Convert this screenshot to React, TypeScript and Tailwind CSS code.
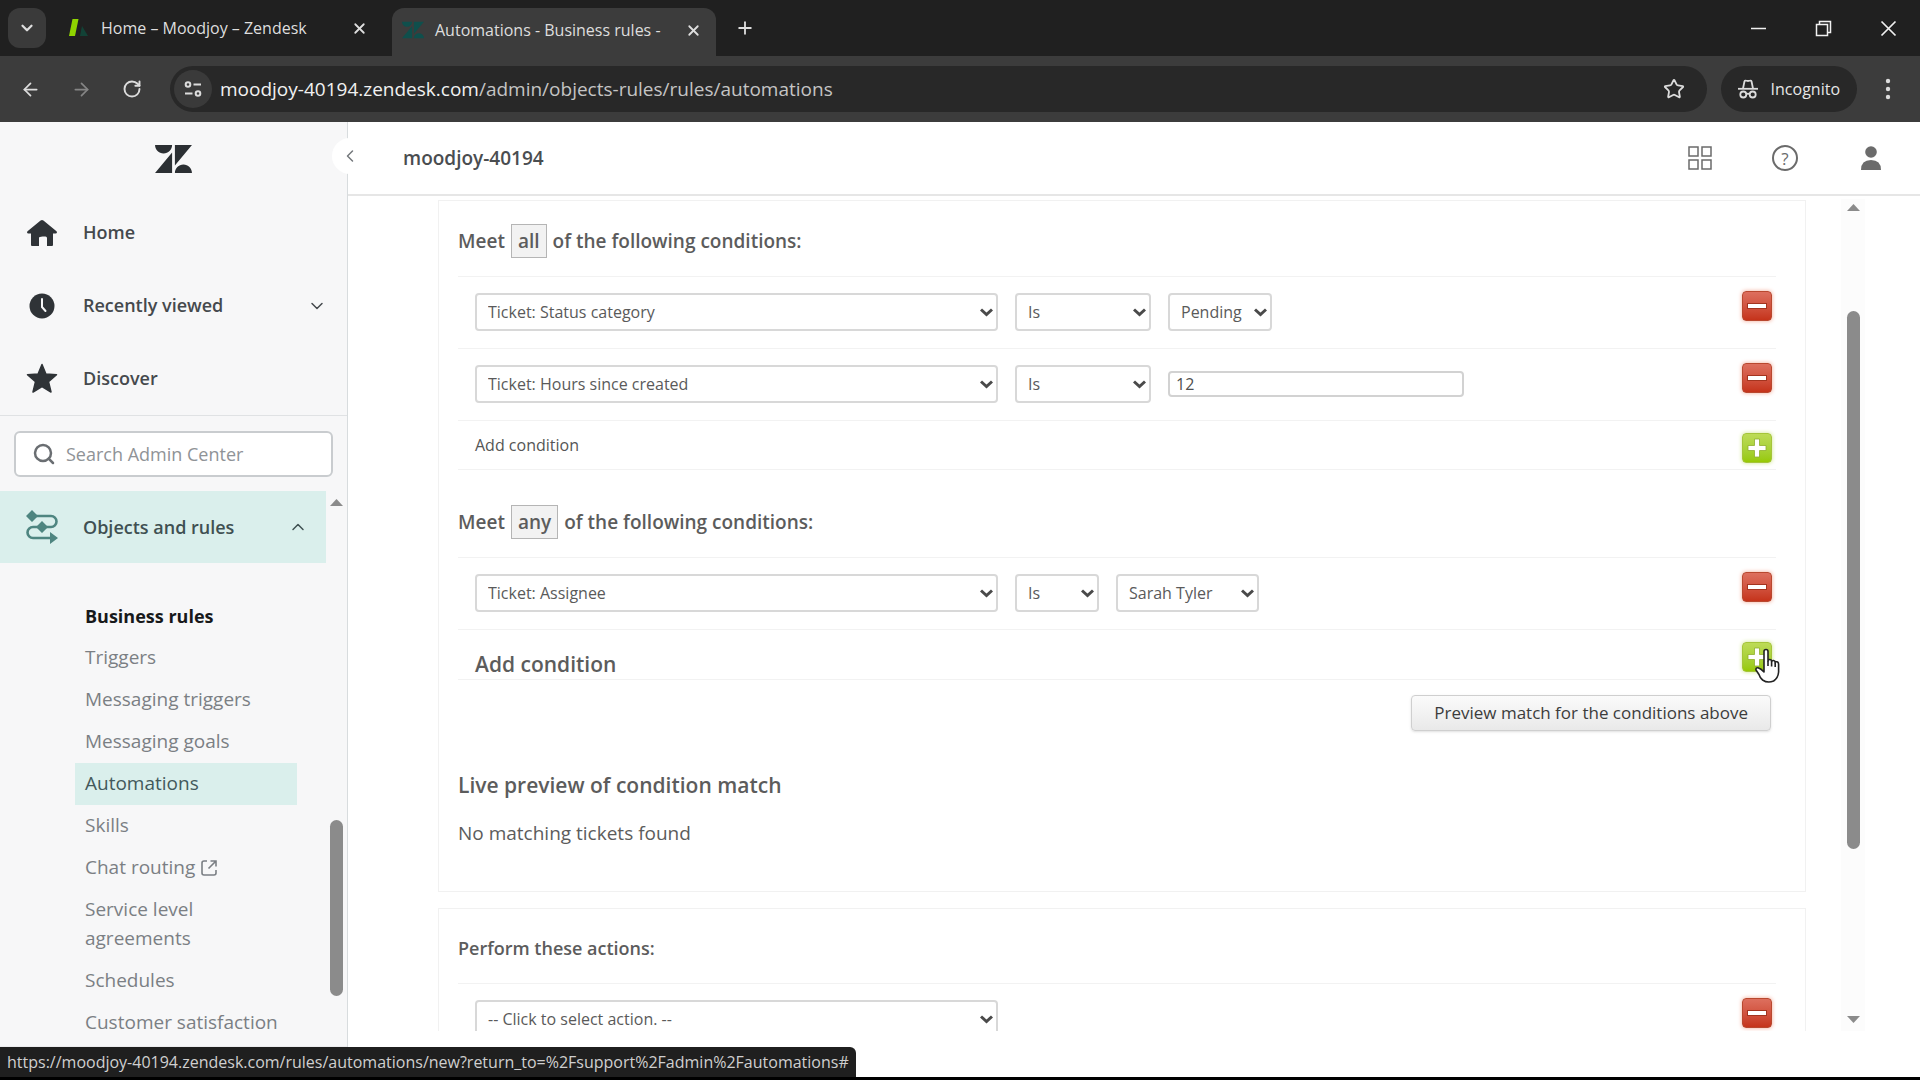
import { useState } from "react";
import type { ReactNode } from "react";
import { ArrowLeft, ArrowRight, ChevronDown, ChevronLeft, ChevronUp, Plus, RotateCw, Search, Star, X } from "lucide-react";

const RULE_LINKS = [
    "Triggers",
    "Messaging triggers",
    "Messaging goals",
    "Automations",
    "Skills",
    "Chat routing",
    "Service level agreements",
    "Schedules",
    "Customer satisfaction",
];

function ZendeskMark({ className }: { className: string }) {
    return (
        <svg viewBox="0 2.9 24 18.2" className={className} fill="currentColor" aria-hidden="true">
            <path d="M12.914 2.904V16.29L24 2.905H12.914zM0 2.906C0 5.966 2.483 8.45 5.543 8.45s5.542-2.484 5.543-5.544H0zm11.086 4.807L0 21.096h11.086V7.713zm7.37 7.84c-3.063 0-5.542 2.48-5.542 5.543H24c0-3.06-2.48-5.543-5.543-5.543z" />
        </svg>
    );
}

/* Browser chrome */

function TabStrip() {
    return (
        <div className="flex h-14 shrink-0 items-end bg-[#202020] text-[#dedede]">
            <button type="button" aria-label="Search tabs" className="mb-2 ml-2 flex h-10 w-[38px] shrink-0 items-center justify-center rounded-xl bg-[#3a3a3a]">
                <ChevronDown size={18} strokeWidth={3} />
            </button>
            <div className="flex h-14 w-[346px] items-center pl-[22px] pr-6">
                <svg width="20" height="20" viewBox="0 0 20 20" aria-hidden="true">
                    <path d="M4.5 1h6l-3.500 17h-6z" fill="#8fd400" />
                    <path d="M14 8l6 10h-8z" fill="#124236" />
                </svg>
                <span className="ml-[13px] flex-1 whitespace-nowrap text-[16px]">Home – Moodjoy – Zendesk</span>
                <button type="button" aria-label="Close Home tab"><X size={17} strokeWidth={2.5} /></button>
            </div>
            <div className="flex h-12 w-[324px] items-center rounded-t-xl bg-[#3c3c3c] pb-1 pl-[10px] pr-[14px]">
                <ZendeskMark className="h-[18px] w-[22px] shrink-0 text-[#0f4f4c]" />
                <span className="ml-[11px] flex-1 whitespace-nowrap text-[16px]">Automations - Business rules -</span>
                <button type="button" aria-label="Close Automations tab" className="ml-4"><X size={17} strokeWidth={2.5} /></button>
            </div>
            <button type="button" aria-label="New tab" className="mb-[18px] ml-[19px]"><Plus size={20} strokeWidth={2.2} /></button>
            <div className="flex h-14 flex-1 items-center justify-end gap-[48px] pr-[23px] text-[#f0f0f0]">
                <button type="button" aria-label="Minimize">
                    <svg width="17" height="17" viewBox="0 0 17 17" stroke="currentColor" strokeWidth="1.5"><path d="M1 8.500h15" /></svg>
                </button>
                <button type="button" aria-label="Restore">
                    <svg width="17" height="17" viewBox="0 0 17 17" fill="none" stroke="currentColor" strokeWidth="1.5"><path d="M1.500 4.500h11v11h-11zM4.500 4.500v-3h11v11h-3" /></svg>
                </button>
                <button type="button" aria-label="Close">
                    <svg width="17" height="17" viewBox="0 0 17 17" fill="none" stroke="currentColor" strokeWidth="1.7"><path d="M1.500 1.500l14 14M15.500 1.500l-14 14" /></svg>
                </button>
            </div>
        </div>
    );
}

function Toolbar() {
    return (
        <div className="flex h-[66px] shrink-0 items-center bg-[#3c3c3c] text-[#dcdcdc]">
            <button type="button" aria-label="Back" className="ml-5"><ArrowLeft size={21} strokeWidth={2} /></button>
            <button type="button" aria-label="Forward" className="ml-[30px] text-[#858585]"><ArrowRight size={21} strokeWidth={2} /></button>
            <button type="button" aria-label="Reload" className="ml-[30px]"><RotateCw size={20} strokeWidth={2.3} /></button>
            <div className="ml-7 flex h-[46px] flex-1 items-center rounded-full bg-[#282828] pl-1 pr-[22px]">
                <button type="button" aria-label="Site information" className="flex h-[38px] w-[38px] items-center justify-center rounded-full bg-[#3a3a3a]">
                    <svg width="18" height="18" viewBox="0 0 18 18" fill="none" stroke="currentColor" strokeWidth="2">
                        <circle cx="4" cy="4.500" r="2.300" />
                        <path d="M9.500 4.500H17M1 13.500h7.500" />
                        <circle cx="14" cy="13.500" r="2.300" />
                    </svg>
                </button>
                <p className="ml-2 flex-1 text-[19px] text-[#c4c4c4]">
                    <span className="text-[#f1f1f1]">moodjoy-40194.zendesk.com</span>/admin/objects-rules/rules/automations
                </p>
                <button type="button" aria-label="Bookmark this tab"><Star size={22} strokeWidth={2} /></button>
            </div>
            <div className="ml-[14px] flex h-[46px] items-center rounded-full bg-[#282828] pl-4 pr-[17px]">
                <svg width="22" height="22" viewBox="0 0 22 22" fill="none" stroke="currentColor" strokeWidth="1.800" aria-hidden="true">
                    <path d="M6 10.500L7.500 3.300C8 1.800 9.500 3 11 3s3-1.200 3.500.3L16 10.500" />
                    <path d="M1 10.800h20" />
                    <circle cx="6.300" cy="16.500" r="3" />
                    <circle cx="15.700" cy="16.500" r="3" />
                    <path d="M9.300 16.200q1.700-1 3.400 0" />
                </svg>
                <span className="ml-3 text-[16px] text-[#e6e6e6]">Incognito</span>
            </div>
            <button type="button" aria-label="Menu" className="ml-7 mr-[29px]">
                <svg width="6" height="22" viewBox="0 0 6 22" fill="currentColor"><circle cx="3" cy="3" r="2.200" /><circle cx="3" cy="11" r="2.200" /><circle cx="3" cy="19" r="2.200" /></svg>
            </button>
        </div>
    );
}

/* Sidebar */

function NavItem({ icon, label, children }: { icon: ReactNode; label: string; children?: ReactNode }) {
    return (
        <a href="#" className="flex h-[73px] items-center pl-[26px] pr-5 text-[18px] font-semibold text-[#45494d]">
            <span className="flex w-8 shrink-0 items-center justify-center text-[#2f3337]">{icon}</span>
            <span className="ml-[25px] flex-1">{label}</span>
            {children}
        </a>
    );
}

function Sidebar() {
    return (
        <aside className="flex w-[348px] shrink-0 flex-col border-r border-[#d8dcde] bg-[#f7f7f8]">
            <div className="flex h-[74px] shrink-0 items-center justify-center">
                <ZendeskMark className="h-[28px] w-[37px] text-[#2b2f33]" />
            </div>
            <nav className="shrink-0 border-b border-[#e0e2e4]">
                <NavItem
                    label="Home"
                    icon={
                        <svg width="32" height="28" viewBox="0 0 32 28" fill="currentColor">
                            <path d="M14.600 1.500q1.400-1.200 2.800 0L30.500 12.300q1.200 1.700-.8 2.200H27V26q0 1-1 1h-5v-8q0-1.500-1.500-1.500h-3Q13 17.500 13 19v8H6q-1 0-1-1V14.500H2.300q-2-.5-.8-2.200z" />
                        </svg>
                    }
                />
                <NavItem
                    label="Recently viewed"
                    icon={
                        <svg width="26" height="26" viewBox="0 0 26 26">
                            <circle cx="13" cy="13" r="12.500" fill="currentColor" />
                            <path d="M13 6v8l3.500 4" fill="none" stroke="#f7f7f8" strokeWidth="2" strokeLinecap="round" />
                        </svg>
                    }
                >
                    <ChevronDown size={20} strokeWidth={1.8} />
                </NavItem>
                <NavItem
                    label="Discover"
                    icon={
                        <svg width="32" height="31" viewBox="0 0 32 31" fill="currentColor" stroke="currentColor" strokeWidth="1.500" strokeLinejoin="round">
                            <path d="M16 1.500l3.900 9.500 10.600.8-8 6.800 2.500 10.400L16 23.500 7 29l2.500-10.400-8-6.800 10.600-.8z" />
                        </svg>
                    }
                />
            </nav>
            <div className="shrink-0 px-[14px] pb-[14px] pt-[15px]">
                <label className="flex h-[46px] items-center rounded-md border-2 border-[#c9cccf] bg-white pl-4">
                    <Search size={24} strokeWidth={2.5} className="shrink-0 text-[#6a6e72]" />
                    <input
                        type="text"
                        aria-label="Search Admin Center"
                        placeholder="Search Admin Center"
                        className="ml-[10px] min-w-0 flex-1 text-[18px] outline-none placeholder:text-[#8f9397]"
                    />
                </label>
            </div>
            <div className="flex min-h-0 flex-1">
                <div className="min-w-0 flex-1 overflow-hidden">
                    <button type="button" className="flex h-[72px] w-full items-center bg-[#daefec] pl-[26px] pr-[18px] text-left text-[18px] font-semibold text-[#3f5052]">
                        <svg width="32" height="34" viewBox="0 0 32 34" fill="none" stroke="#4e8580" strokeWidth="2.600" aria-hidden="true">
                            <path d="M6 6h19a5 5 0 0 1 0 11H7a5.500 5.500 0 0 0 0 11h19" />
                            <path d="M6 0l6 6-6 6-6-6zM16 11l6 6-6 6-6-6zM24 22l8 6-8 6z" fill="#4e8580" stroke="none" />
                        </svg>
                        <span className="ml-[25px] flex-1">Objects and rules</span>
                        <ChevronUp size={20} strokeWidth={1.8} />
                    </button>
                    <div className="pl-[75px] pt-8">
                        <h2 className="pl-[10px] text-[18px] font-bold leading-[42px] text-[#17191b]">Business rules</h2>
                        <ul className="mr-[29px] text-[19px] leading-[29px]">
                            {RULE_LINKS.map(label => (
                                <li key={label}>
                                    <a
                                        href="#"
                                        className={`flex items-center pb-[7px] pl-[10px] pt-1.5 ${label === "Automations" ? "bg-[#daefec] text-[#43595b]" : "text-[#7b7f84]"}`}
                                    >
                                        <span className={label === "Service level agreements" ? "w-32" : "whitespace-nowrap"}>{label}</span>
                                        {label === "Chat routing" && (
                                            <svg width="16" height="16" viewBox="0 0 16 16" fill="none" stroke="currentColor" strokeWidth="1.600" className="ml-1.5" aria-hidden="true">
                                                <path d="M6 1H3a2 2 0 0 0-2 2v10a2 2 0 0 0 2 2h10a2 2 0 0 0 2-2v-3M9.500 1H15v5.500M15 1L7.500 8.500" />
                                            </svg>
                                        )}
                                    </a>
                                </li>
                            ))}
                        </ul>
                    </div>
                </div>
                <div className="flex w-[21px] shrink-0 flex-col items-center pt-2" aria-hidden="true">
                    <svg width="13" height="7" viewBox="0 0 13 7" fill="#8b8b8b"><path d="M6.500 0L13 7H0z" /></svg>
                    <div className="mt-[314px] h-[176px] w-[13px] rounded-full bg-[#8b8b8b]" />
                </div>
            </div>
            <div className="h-[31px] shrink-0 border-t border-[#ececee]" />
        </aside>
    );
}

/* Rule form */

function Select({ label, value, width }: { label: string; value: string; width: string }) {
    return (
        <div className={`grid h-[38px] items-center ${width}`}>
            <select
                aria-label={label}
                defaultValue={value}
                className="col-start-1 row-start-1 h-full w-full appearance-none rounded-sm border-2 border-[#d8d8d8] bg-white pl-[11px] text-[16px] text-[#5a5a5a]"
            >
                <option>{value}</option>
            </select>
            <svg width="13" height="9" viewBox="0 0 13 9" fill="none" stroke="#4a4a4a" strokeWidth="3" className="pointer-events-none z-10 col-start-1 row-start-1 mr-[5px] justify-self-end" aria-hidden="true">
                <path d="M1 1.500l5.500 5 5.500-5" />
            </svg>
        </div>
    );
}

function RemoveButton() {
    return (
        <button type="button" aria-label="Remove condition" className="-mt-0.5 flex h-[30px] w-[30px] shrink-0 items-center justify-center rounded-sm border border-[#b9482f] bg-linear-to-b from-[#dd6f5e] to-[#c5331a] shadow-[0_0_4px_#f3a793]">
            <span className="h-1.5 w-5 border border-[#a3341f] bg-white" />
        </button>
    );
}

function AddButton() {
    return (
        <button type="button" aria-label="Add condition" className="flex h-[30px] w-[30px] shrink-0 items-center justify-center rounded-sm border border-[#a5c53a] bg-linear-to-b from-[#bddb56] to-[#97c900] shadow-[0_0_4px_#cfe58a]">
            <svg width="20" height="20" viewBox="0 0 20 20" fill="#fff" stroke="#8fae2c" strokeWidth="0.800"><path d="M7.500 1h5v6.500H19v5h-6.500V19h-5v-6.500H1v-5h6.500z" /></svg>
        </button>
    );
}

function RuleRow({ children }: { children: ReactNode }) {
    return (
        <div className="flex items-start justify-between border-t border-[#f2f2f2] pb-[17px] pl-[17px] pr-1 pt-4">
            <div className="flex items-center gap-[17px]">{children}</div>
            <RemoveButton />
        </div>
    );
}

function MatchHeading({ word }: { word: string }) {
    return (
        <h3 className="flex items-center pb-[18px] pt-[23px] text-[19px] leading-7 font-semibold text-[#5c5c5c]">
            Meet
            <span className="mx-1.5 flex h-[34px] items-center border border-[#b5b5b5] bg-[#f2f2f2] px-[6px]">{word}</span>
            of the following conditions:
        </h3>
    );
}

function RuleForm() {
    const [hours, setHours] = useState("12");

    return (
        <div className="min-w-0 flex-1 overflow-hidden pl-[90px] pr-[35px] pt-1">
            <section className="border border-[#f1f1f1] pb-[46px] pl-[19px] pr-[29px]">
                <MatchHeading word="all" />
                <RuleRow>
                    <Select label="Condition" value="Ticket: Status category" width="w-[523px]" />
                    <Select label="Operator" value="Is" width="w-[136px]" />
                    <Select label="Value" value="Pending" width="w-[104px]" />
                </RuleRow>
                <RuleRow>
                    <Select label="Condition" value="Ticket: Hours since created" width="w-[523px]" />
                    <Select label="Operator" value="Is" width="w-[136px]" />
                    <input
                        type="text"
                        aria-label="Hours"
                        value={hours}
                        onChange={e => setHours(e.target.value)}
                        className="h-[26px] w-[296px] rounded-sm border-2 border-[#d2d2d2] bg-white pl-1.5 text-[16px] text-[#4f4f4f]"
                    />
                </RuleRow>
                <div className="flex h-[50px] justify-between border-y border-[#f2f2f2] pl-[17px] pr-1 pt-3">
                    <span className="text-[16px] text-[#555555]">Add condition</span>
                    <AddButton />
                </div>

                <div className="mt-3">
                    <MatchHeading word="any" />
                </div>
                <RuleRow>
                    <Select label="Condition" value="Ticket: Assignee" width="w-[523px]" />
                    <Select label="Operator" value="Is" width="w-[84px]" />
                    <Select label="Value" value="Sarah Tyler" width="w-[143px]" />
                </RuleRow>
                <div className="flex h-[51px] justify-between border-y border-[#f2f2f2] pl-[17px] pr-1 pt-3">
                    <span className="pt-2 text-[21px] leading-7 font-semibold text-[#5c5c5c]">Add condition</span>
                    <AddButton />
                </div>

                <div className="mt-[15px] flex justify-end pr-[5px]">
                    <button type="button" className="h-9 rounded-sm border border-[#cfcfcf] bg-linear-to-b from-[#fbfbfb] to-[#e9e9e9] px-[22px] text-[17px] text-[#3c3c3c] shadow-sm">
                        Preview match for the conditions above
                    </button>
                </div>
                <h3 className="mt-10 text-[21px] leading-7 font-semibold text-[#5c5c5c]">Live preview of condition match</h3>
                <p className="mt-[22px] text-[19px] leading-6 text-[#5c5c5c]">No matching tickets found</p>
            </section>

            <section className="mt-4 border border-[#f1f1f1] pl-[19px] pr-[29px]">
                <h3 className="pb-[22px] pt-[26px] text-[18px] leading-[26px] font-semibold text-[#5c5c5c]">Perform these actions:</h3>
                <RuleRow>
                    <Select label="Action" value="-- Click to select action. --" width="w-[523px]" />
                </RuleRow>
            </section>
        </div>
    );
}

function PageHeader() {
    return (
        <header className="flex h-[74px] shrink-0 items-center border-b-2 border-[#e6e6e6] pl-[55px] pr-[39px]">
            <h1 className="flex-1 text-[19px] font-semibold text-[#4a4d50]">moodjoy-40194</h1>
            <div className="flex items-center text-[#6b6b6b]">
                <button type="button" aria-label="Products">
                    <svg width="24" height="24" viewBox="0 0 24 24" fill="none" stroke="currentColor" strokeWidth="1.500">
                        <path d="M1 1h9v9H1zM14 1h9v9h-9zM1 14h9v9H1zM14 14h9v9h-9z" />
                    </svg>
                </button>
                <button type="button" aria-label="Help" className="ml-[60px] flex h-[26px] w-[26px] items-center justify-center rounded-full border-2 border-[#6b6b6b] text-[17px] leading-none">?</button>
                <button type="button" aria-label="Profile" className="ml-[63px]">
                    <svg width="20" height="24" viewBox="0 0 20 24" fill="currentColor">
                        <circle cx="10" cy="6" r="5.800" />
                        <path d="M0 24q0-10 10-10t10 10z" />
                    </svg>
                </button>
            </div>
        </header>
    );
}

export default function App() {
    return (
        <div className="relative flex h-screen flex-col overflow-hidden bg-white font-['Open_Sans','Noto_Sans',sans-serif]">
            <TabStrip />
            <Toolbar />
            <div className="relative flex min-h-0 flex-1">
                <Sidebar />
                <button type="button" aria-label="Collapse sidebar" className="absolute left-[332px] top-[16px] flex h-9 w-9 items-center justify-center rounded-full bg-white text-[#74787c]">
                    <ChevronLeft size={20} strokeWidth={1.8} />
                </button>
                <main className="flex min-w-0 flex-1 flex-col">
                    <PageHeader />
                    <div className="flex min-h-0 flex-1">
                        <RuleForm />
                        <div className="mr-[55px] mt-[3px] flex w-6 shrink-0 flex-col items-center bg-[#fcfcfc] pb-2 pt-[5px]" aria-hidden="true">
                            <svg width="13" height="7" viewBox="0 0 13 7" fill="#8b8b8b"><path d="M6.500 0L13 7H0z" /></svg>
                            <div className="mt-[100px] h-[538px] w-[13px] rounded-full bg-[#8b8b8b]" />
                            <svg width="13" height="7" viewBox="0 0 13 7" fill="#8b8b8b" className="mt-auto"><path d="M6.500 7L13 0H0z" /></svg>
                        </div>
                    </div>
                    <div className="h-[46px] shrink-0" />
                </main>
            </div>
            <div className="h-[3px] shrink-0 bg-black" />

            {/* Link status bubble */}
            <div className="absolute bottom-[3px] left-0 flex h-[30px] items-center rounded-tr-md bg-[#1f1f1f] pl-[7px] pr-[7px] text-[16px] text-[#cfcfcf]">
                https://moodjoy-40194.zendesk.com/rules/automations/new?return_to=%2Fsupport%2Fadmin%2Fautomations#
            </div>

            {/* Pointer over the add button */}
            <svg width="26" height="36" viewBox="0 0 26 36" fill="#fff" stroke="#222" strokeWidth="1.600" strokeLinejoin="round" className="pointer-events-none absolute left-[1755px] top-[648px]" aria-hidden="true">
                <path d="M9 3.500q0-2 2-2t2 2V13q0-1.500 1.800-1.500t1.800 2q.2-1.200 1.900-1t1.600 2.100q.2-1 1.800-.8t1.700 2.500V24q-.5 6-5 9-6 2.500-11-1Q5 30 4 26.500L1 22q-.5-2.500 2-2.300Q6 20.500 9 24z" />
                <path d="M13 13v5M16.600 13.500v5M20.200 15v4" fill="none" />
            </svg>
        </div>
    );
}
